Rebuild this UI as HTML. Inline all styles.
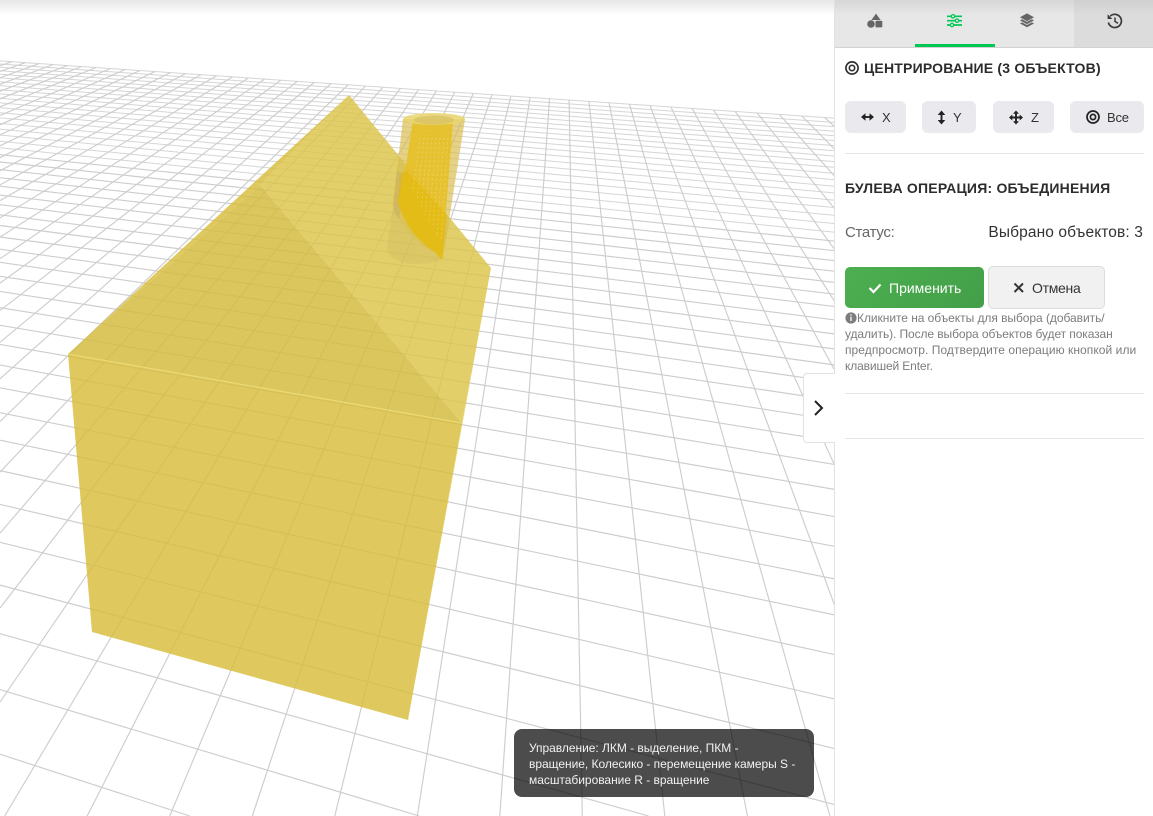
<!DOCTYPE html>
<html lang="ru"><head><meta charset="utf-8"><title>3D</title>
<style>
html,body{margin:0;padding:0;width:1153px;height:816px;overflow:hidden;background:#fff;font-family:"Liberation Sans","Noto Sans CJK SC",sans-serif}
.a{position:absolute;white-space:nowrap}
#stage{position:absolute;left:0;top:0;width:835px;height:816px;overflow:hidden;background:#fff}
#shadow{position:absolute;left:0;top:0;width:835px;height:15px;background:linear-gradient(#e6e6e6,#fff)}
#panel{position:absolute;left:834px;top:0;width:319px;height:816px;background:#fff;border-left:1px solid #e2e2e2;box-sizing:border-box}
#tabs{position:absolute;left:835px;top:0;width:318px;height:47px;background:linear-gradient(#d6d6d6 0,#e7e7e7 15px)}
.btn{position:absolute;top:101px;height:32px;background:#e9e9ee;border-radius:6px}
.bt{position:absolute;top:109px;font-size:13px;line-height:17px;color:#333;white-space:nowrap}
.hr{position:absolute;left:845px;width:299px;height:1px;background:#e4e4e4}
.h{font-size:14px;font-weight:700;color:#2c2c2c;line-height:18px}
.n{font-size:12px;color:#7c7c7c;line-height:16px;left:845px}
.t{font-size:12px;color:#f2f2f2;line-height:16px;left:529px;letter-spacing:-.03px}
</style></head><body>
<div id="stage">
<svg width="835" height="816" viewBox="0 0 835 816" style="position:absolute;left:0;top:0">
<g id="grid" stroke="#cdcdcd" stroke-width="1.15" fill="none"></g>
<!-- box -->
<polygon points="68,354 462,423 408,720 92,632" fill="rgb(216,189,60)" fill-opacity=".82"/>
<polygon points="68,354 260,185 462,423" fill="rgb(212,186,60)" fill-opacity=".83"/>
<polygon points="260,185 349,95 491,268 462,423" fill="rgb(220,197,73)" fill-opacity=".82"/>
<polygon points="68,354 349,95 260,185" fill="rgb(216,189,60)" fill-opacity=".82"/>
<polygon points="462,423 491,268 408,720" fill="rgb(223,203,80)" fill-opacity=".82"/>
<line x1="68" y1="354" x2="462" y2="423" stroke="#ecdb78" stroke-width="1.1"/>
<!-- outer cylinder -->
<path d="M403,119 L393,205 L387,248 Q388,262 415,264 Q435,264 443,258 L465,119 Z" fill="#cdb75c" fill-opacity=".3"/>
<path d="M403,119 L393,203 Q400,232 433,252 L443,258 L465,119 Z" fill="#dcc04a" fill-opacity=".55"/>
<path d="M397,170 L393,205 Q394,214 399,220 L405,175 Z" fill="#b9a770" fill-opacity=".35"/>
<!-- inner cylinder -->
<path d="M413,120 L406,165 L398,202 Q410,236 435,252 L442,260 L453,122 Z" fill="#e6bf22" fill-opacity=".85"/>
<path d="M400,175 L398,203 Q408,236 435,252 L442,260 L447,215 Q425,190 405,170 Z" fill="#e3b800" fill-opacity=".45"/>
<g stroke="#f6e8a2" stroke-width=".75" stroke-dasharray="2 2.5" fill="none" opacity=".5">
<path d="M420,138 L413,190M424,138 L417,200M428,138 L421,208M432,138 L425,215M436,138 L429,222M440,138 L433,228M444,138 L437,235M448,138 L441,240"/>
</g>
<!-- top ellipse -->
<ellipse cx="434" cy="119" rx="31" ry="6" fill="#e9d66e" fill-opacity=".85"/>
<ellipse cx="434" cy="120" rx="20" ry="4.5" fill="#d8c266" fill-opacity=".75"/>
</svg>
<div id="shadow"></div>
</div>
<div id="panel"></div>
<div id="tabs"></div>
<div class="a" style="left:1074px;top:0;width:79px;height:47px;background:linear-gradient(#d0d0d0 0,#dcdcdc 15px)"></div>
<div class="a" style="left:835px;top:47px;width:318px;height:1px;background:#d2d2d2"></div>
<div class="a" style="left:915px;top:44px;width:80px;height:3px;background:#00c853"></div>
<div class="btn" style="left:845px;width:61px"></div>
<div class="btn" style="left:922px;width:54px"></div>
<div class="btn" style="left:993px;width:61px"></div>
<div class="btn" style="left:1070px;width:74px"></div>
<div class="a" style="left:845px;top:267px;width:139px;height:41px;border-radius:5px;background:linear-gradient(135deg,#4caf50,#439f48)"></div>
<div class="a" style="left:988px;top:266px;width:117px;height:43px;box-sizing:border-box;border:1px solid #dcdcdc;border-radius:5px;background:#f1f1f1"></div>
<svg width="1153" height="816" viewBox="0 0 1153 816" style="position:absolute;left:0;top:0;pointer-events:none">
<!-- tab icons -->
<g fill="#666"><path d="M876,13.6 L880.6,20 L871.4,20 Z"/><circle cx="871" cy="24" r="3.8"/><rect x="875.5" y="20.8" width="6.8" height="6.6" rx=".8"/></g>
<g stroke="#00c853" stroke-width="1.7" fill="#e7e7e7"><path d="M947,16.3H962M947,20.7H962M947,25H962"/><circle cx="953" cy="16.3" r="1.7" stroke-width="1.3"/><circle cx="957" cy="20.7" r="1.7" stroke-width="1.3"/><circle cx="952" cy="25" r="1.7" stroke-width="1.3"/></g>
<g fill="#666" stroke="#e7e7e7" stroke-width=".7"><path d="M1027,19.3 L1034.8,23.4 L1027,27.7 L1019.2,23.4 Z"/><path d="M1027,16.2 L1034.8,20.4 L1027,24.6 L1019.2,20.4 Z"/><path d="M1027,13 L1034.8,17.3 L1027,21.5 L1019.2,17.3 Z"/></g>
<g stroke="#3a3a3a" stroke-width="1.7" fill="none"><path d="M1110.2,16.2 A6.6,6.6 0 1 1 1108.4,22.5"/><path d="M1115,17.5V21.5L1118,23.3" stroke-width="1.5"/></g><path d="M1107.6,14.2 L1107.6,19 L1112.4,19 Z" fill="#3a3a3a"/>
<!-- heading bullseye -->
<g fill="none" stroke="#333"><circle cx="852" cy="68" r="6.1" stroke-width="1.7"/><circle cx="852" cy="68" r="2.7" stroke-width="1.6"/></g>
<!-- button icons -->
<g fill="none" stroke="#222" stroke-width="1.9"><path d="M863,117H872"/><path d="M941.5,113V122"/><path d="M1016,112V123M1010.5,117.5H1021.5"/></g>
<g fill="#222"><path d="M861,117 L865.5,113.2V120.8Z M874,117 L869.5,113.2V120.8Z"/><path d="M941.5,110.5 L945.3,115H937.7Z M941.5,124.5 L945.3,120H937.7Z"/><path d="M1016,110.5 L1019,113.8H1013Z M1016,124.5 L1019,121.2H1013Z M1009,117.5 L1012.3,114.5V120.5Z M1023,117.5 L1019.7,114.5V120.5Z"/></g>
<g fill="none" stroke="#222"><circle cx="1093" cy="117" r="6" stroke-width="1.7"/><circle cx="1093" cy="117" r="2.6" stroke-width="1.7"/></g>
<!-- action icons -->
<path d="M869.5,288 L873.5,292 L880.5,284.5" fill="none" stroke="#fff" stroke-width="2.2"/>
<path d="M1014.5,283.5 L1023,292 M1023,283.5 L1014.5,292" fill="none" stroke="#333" stroke-width="2"/>
<circle cx="851" cy="318" r="5.6" fill="#7d7d7d"/><path d="M851,316.8V321M851,314.4V315.8" stroke="#fff" stroke-width="1.3"/>
</svg>
<div class="a h" style="left:864px;top:59px;letter-spacing:.2px">ЦЕНТРИРОВАНИЕ (3 ОБЪЕКТОВ)</div>
<div class="hr" style="top:153px"></div>
<div class="bt" style="left:882px">X</div>
<div class="bt" style="left:953px">Y</div>
<div class="bt" style="left:1031px">Z</div>
<div class="bt" style="left:1107px;letter-spacing:-.2px">Все</div>
<div class="a h" style="left:845px;top:179px;letter-spacing:.21px">БУЛЕВА ОПЕРАЦИЯ: ОБЪЕДИНЕНИЯ</div>
<div class="a" style="left:845px;top:224px;font-size:15px;line-height:18px;color:#666;letter-spacing:-.3px">Статус:</div>
<div class="a" style="right:10px;top:224px;font-size:15.5px;line-height:18px;color:#333;letter-spacing:.12px">Выбрано объектов: 3</div>
<div class="a" style="left:889px;top:279px;font-size:14px;line-height:18px;color:#fff">Применить</div>
<div class="a" style="left:1032px;top:279px;font-size:14px;line-height:18px;color:#333;letter-spacing:-.3px">Отмена</div>
<div class="a n" style="top:310px;left:857px;letter-spacing:-.05px">Кликните на объекты для выбора (добавить/</div>
<div class="a n" style="top:326px;letter-spacing:-.09px">удалить). После выбора объектов будет показан</div>
<div class="a n" style="top:342px;letter-spacing:.06px">предпросмотр. Подтвердите операцию кнопкой или</div>
<div class="a n" style="top:358px;letter-spacing:-.13px">клавишей Enter.</div>
<div class="hr" style="top:393px"></div>
<div class="hr" style="top:438px"></div>
<div class="a" style="left:803px;top:373px;width:32px;height:70px;box-sizing:border-box;background:#fff;border:1px solid #e2e2e2;border-right:none;border-radius:4px 0 0 4px"></div>
<svg width="12" height="18" viewBox="0 0 12 18" style="position:absolute;left:813px;top:399px"><path d="M2,2 L9,9 L2,16" fill="none" stroke="#222" stroke-width="2"/></svg>
<div class="a" style="left:514px;top:729px;width:300px;height:68px;border-radius:8px;background:rgba(0,0,0,.7)"></div>
<div class="a t" style="top:740px">Управление: ЛКМ - выделение, ПКМ -</div>
<div class="a t" style="top:756px">вращение, Колесико - перемещение камеры S -</div>
<div class="a t" style="top:772px">масштабирование R - вращение</div>
<script>
(function(){
var VA=[-2700,-125],VB=[565,-125],O=[97,661],a=-0.02111,b=-0.05868,JF=-45,IMIN=-45,IMAX=40,s='';
var W=835,H=816;
function P(i,j){var w=1+a*i+b*j;return [(a*i*VA[0]+b*j*VB[0]+O[0])/w,(a*i*VA[1]+b*j*VB[1]+O[1])/w];}
function L(p,q,extra){
  var t0=0,t1=1,dx=q[0]-p[0],dy=q[1]-p[1];
  var ps=[-dx,dx,-dy,dy],qs=[p[0],W-p[0],p[1],H-p[1]];
  for(var k=0;k<4;k++){
    if(ps[k]===0){if(qs[k]<0)return;continue;}
    var r=qs[k]/ps[k];
    if(ps[k]<0){if(r>t1)return;if(r>t0)t0=r;}else{if(r<t0)return;if(r<t1)t1=r;}
  }
  s+='<line x1="'+(p[0]+t0*dx).toFixed(1)+'" y1="'+(p[1]+t0*dy).toFixed(1)+'" x2="'+(p[0]+t1*dx).toFixed(1)+'" y2="'+(p[1]+t1*dy).toFixed(1)+'"'+(extra||'')+'/>';
}
var far=' stroke="#d5d5d5" stroke-width="1"';
for(var j=JF;j<=16;j++){var im=Math.min(IMAX,(-0.93-b*j)/a);if(im>IMIN)L(P(IMIN,j),P(im,j),j<-25?far:'');}
for(var i=IMIN;i<=IMAX;i++){var jm=Math.min(40,(-0.93-a*i)/b);if(jm>JF)L(P(i,JF),P(i,jm));}
document.getElementById('grid').innerHTML=s;
})();
</script>
</body></html>
